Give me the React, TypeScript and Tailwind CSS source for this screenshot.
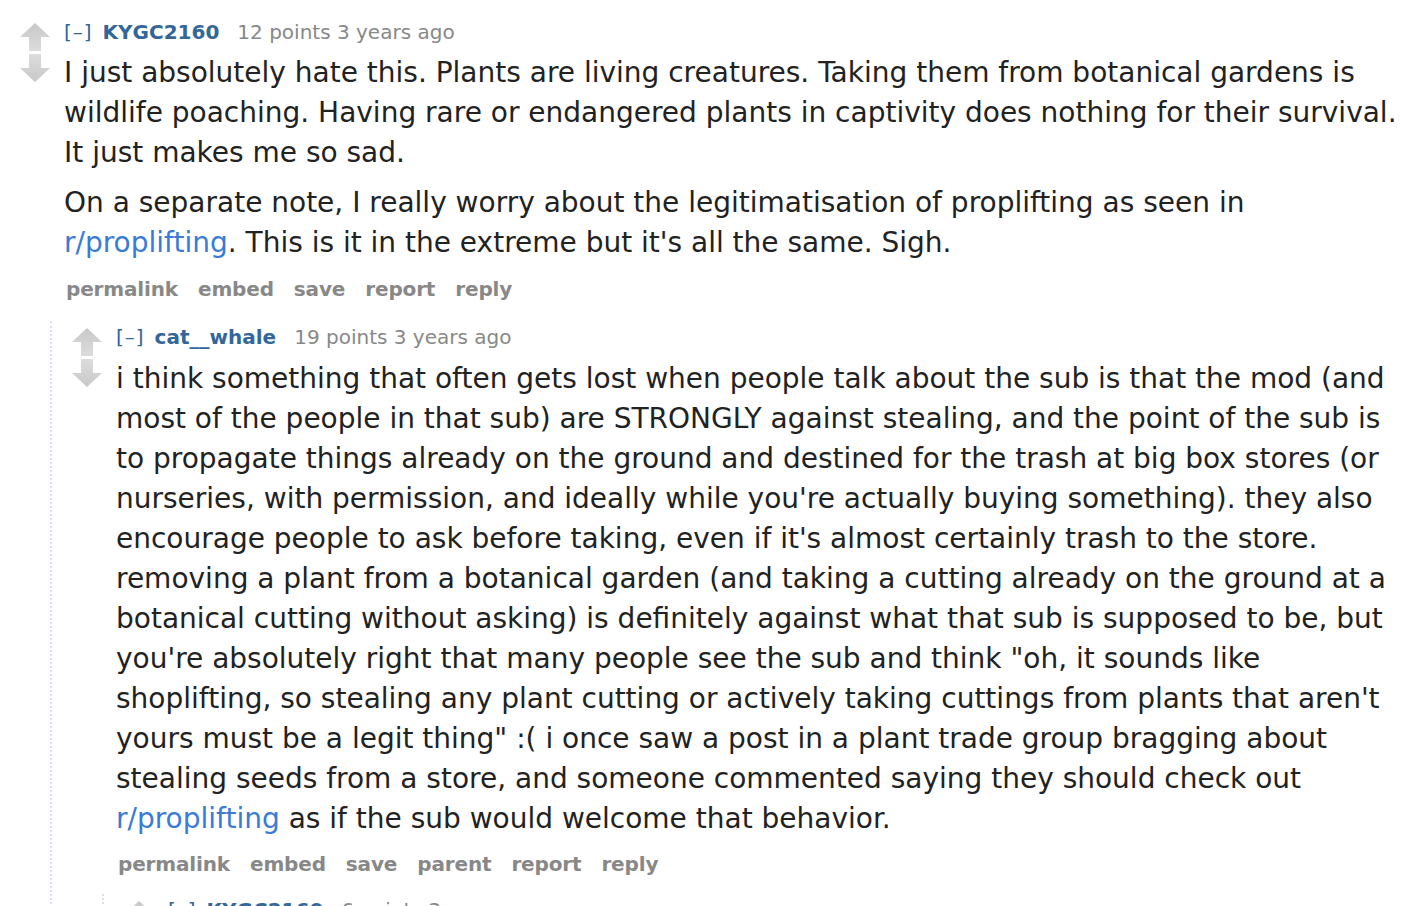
import React from 'react';

const font = { fontFamily: '"DejaVu Sans", Verdana, sans-serif' };

function Arrows() {
  return (
    <div className="flex flex-col items-center gap-[3px] w-[32px] shrink-0 pt-[3px]">
      <svg width="30" height="28" viewBox="0 0 30 28">
        <defs>
          <linearGradient id="ua" x1="0" y1="0" x2="0" y2="1">
            <stop offset="0" stopColor="#c8c8c8" />
            <stop offset="1" stopColor="#dcdcdc" />
          </linearGradient>
        </defs>
        <path d="M15 0 L30 14 L21 14 L21 28 L9 28 L9 14 L0 14 Z" fill="url(#ua)" />
      </svg>
      <svg width="30" height="28" viewBox="0 0 30 28">
        <defs>
          <linearGradient id="da" x1="0" y1="0" x2="0" y2="1">
            <stop offset="0" stopColor="#dcdcdc" />
            <stop offset="1" stopColor="#c8c8c8" />
          </linearGradient>
        </defs>
        <path d="M9 0 L21 0 L21 14 L30 14 L15 28 L0 14 L9 14 Z" fill="url(#da)" />
      </svg>
    </div>
  );
}

function Tagline({ user, points }: { user: string; points: string }) {
  return (
    <div className="flex items-baseline text-[20px] leading-[24px] h-[24px] whitespace-nowrap">
      <span className="text-[#369] tracking-[1px]">[–]</span>
      <span className="ml-[10px] font-bold text-[#369]">{user}</span>
      <span className="ml-[18px] text-[#888]">{points} 3 years ago</span>
    </div>
  );
}

function Buttons({ items }: { items: string[] }) {
  return (
    <div className="flex gap-[20px] pl-[2px] text-[20px] leading-[24px] font-bold text-[#888] tracking-[-0.15px]">
      {items.map((b) => (
        <span key={b}>{b}</span>
      ))}
    </div>
  );
}

const Link = ({ children }: { children: React.ReactNode }) => (
  <span className="text-[#3a7bd5]">{children}</span>
);

export default function App() {
  return (
    <div style={font} className="bg-white w-[1426px] h-[906px] overflow-hidden pl-[19px] pt-[20px]">
      <div className="flex">
        <Arrows />
        <div className="ml-[13px] flex-1">
          <Tagline user="KYGC2160" points="12 points" />
          <div className="mt-[9px] text-[28px] leading-[40px] text-[#222] whitespace-nowrap">
            <p>
              I just absolutely hate this. Plants are living creatures. Taking them from botanical gardens is
              <br />
              wildlife poaching. Having rare or endangered plants in captivity does nothing for their survival.
              <br />
              It just makes me so sad.
            </p>
            <p className="mt-[10px]">
              On a separate note, I really worry about the legitimatisation of proplifting as seen in
              <br />
              <Link>r/proplifting</Link>. This is it in the extreme but it's all the same. Sigh.
            </p>
          </div>
          <div className="mt-[14px]">
            <Buttons items={['permalink', 'embed', 'save', 'report', 'reply']} />
          </div>
        </div>
      </div>

      <div className="ml-[31px] mt-[20px] border-l-2 border-dotted border-[#dde] pl-[19px] pt-[4px]">
        <div className="flex">
          <Arrows />
          <div className="ml-[13px] flex-1">
            <Tagline user="cat__whale" points="19 points" />
            <div className="mt-[10px] text-[28px] leading-[40px] text-[#222] whitespace-nowrap">
              <p>
                i think something that often gets lost when people talk about the sub is that the mod (and
                <br />
                most of the people in that sub) are STRONGLY against stealing, and the point of the sub is
                <br />
                to propagate things already on the ground and destined for the trash at big box stores (or
                <br />
                nurseries, with permission, and ideally while you're actually buying something). they also
                <br />
                encourage people to ask before taking, even if it's almost certainly trash to the store.
                <br />
                removing a plant from a botanical garden (and taking a cutting already on the ground at a
                <br />
                botanical cutting without asking) is definitely against what that sub is supposed to be, but
                <br />
                you're absolutely right that many people see the sub and think "oh, it sounds like
                <br />
                shoplifting, so stealing any plant cutting or actively taking cuttings from plants that aren't
                <br />
                yours must be a legit thing" :( i once saw a post in a plant trade group bragging about
                <br />
                stealing seeds from a store, and someone commented saying they should check out
                <br />
                <Link>r/proplifting</Link> as if the sub would welcome that behavior.
              </p>
            </div>
            <div className="mt-[13px]">
              <Buttons items={['permalink', 'embed', 'save', 'parent', 'report', 'reply']} />
            </div>
          </div>
        </div>

        <div className="ml-[31px] mt-[18px] border-l-2 border-dotted border-[#dde] pl-[19px] pt-[4px]">
          <div className="flex">
            <Arrows />
            <div className="ml-[13px] flex-1">
              <Tagline user="KYGC2160" points="6 points" />
            </div>
          </div>
        </div>
      </div>
    </div>
  );
}
